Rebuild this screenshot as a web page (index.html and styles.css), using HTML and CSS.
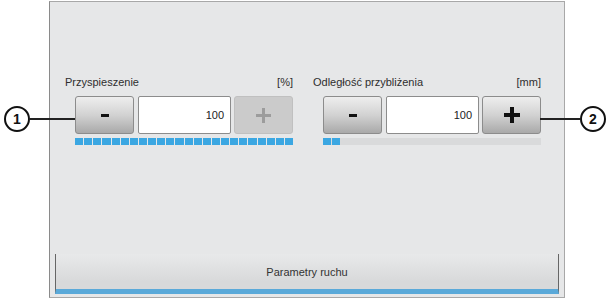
FILE: index.html
```html
<!DOCTYPE html>
<html lang="pl">
<head>
    <meta charset="UTF-8">
    <title>Parametry ruchu</title>
    <link rel="stylesheet" href="styles.css">
</head>
<body>
    <div class="panel">
        <div class="groups">
            <div class="group">
                <div class="group-label">
                    <span>Przyspieszenie</span>
                    <span>[%]</span>
                </div>
                <div class="controls">
                    <button class="step-btn"><span class="minus"></span></button>
                    <div class="value-box">100</div>
                    <button class="step-btn disabled"><span class="plus"></span></button>
                </div>
                <div class="level-bar full">
                    <span></span><span></span><span></span><span></span><span></span><span></span>
                    <span></span><span></span><span></span><span></span><span></span><span></span>
                    <span></span><span></span><span></span><span></span><span></span><span></span>
                    <span></span><span></span><span></span><span></span><span></span><span></span>
                </div>
            </div>
            <div class="group">
                <div class="group-label">
                    <span>Odległość przybliżenia</span>
                    <span>[mm]</span>
                </div>
                <div class="controls">
                    <button class="step-btn"><span class="minus"></span></button>
                    <div class="value-box">100</div>
                    <button class="step-btn"><span class="plus"></span></button>
                </div>
                <div class="level-bar">
                    <span></span><span></span>
                </div>
            </div>
        </div>

        <div class="tab">
            <div class="tab-title">Parametry ruchu</div>
        </div>
    </div>

    <!-- callouts -->
    <div class="callout callout-1">
        <span class="callout-num">1</span>
        <span class="callout-line"></span>
    </div>
    <div class="callout callout-2">
        <span class="callout-line"></span>
        <span class="callout-num">2</span>
    </div>
</body>
</html>
```

FILE: styles.css
```css
* {
    box-sizing: border-box;
}

body {
    margin: 0;
    background-color: #ffffff;
    font-family: 'Liberation Sans', Arial, sans-serif;
    color: #333;
    position: relative;
    width: 614px;
    height: 300px;
    overflow: hidden;
}

.panel {
    margin: 1px 0 0 49px;
    width: 516px;
    height: 297px;
    background-color: #e6e7e8;
    border: 1px solid #a8a8a8;
    border-left-color: #8a8a8a;
    display: flex;
    flex-direction: column;
    padding: 72px 5px 3px 5px;
}

.groups {
    display: flex;
    gap: 20px;
    padding-left: 10px;
}

.group {
    width: 228px;
    display: flex;
    flex-direction: column;
}

.group-label {
    display: flex;
    justify-content: space-between;
    font-size: 11px;
    height: 16px;
    line-height: 16px;
    margin-bottom: 6px;
    color: #2e2e2e;
}

.controls {
    display: flex;
    gap: 3px;
    padding-left: 10px;
    height: 38px;
}

.step-btn {
    width: 59px;
    height: 38px;
    border: 1px solid #8c8c8c;
    border-radius: 3px;
    background: linear-gradient(to bottom, #eeeeee 0%, #d2d2d2 50%, #a9a9a9 100%);
    display: flex;
    align-items: center;
    justify-content: center;
    padding: 0;
    position: relative;
}

.step-btn.disabled {
    background: #cbcbcb;
    border-color: #c0c0c0;
}

.minus {
    width: 8px;
    height: 3px;
    background-color: #111;
}

.plus {
    position: relative;
    width: 16px;
    height: 16px;
}

.plus::before,
.plus::after {
    content: "";
    position: absolute;
    background-color: #111;
}

.plus::before {
    left: 0;
    top: 6px;
    width: 16px;
    height: 4px;
}

.plus::after {
    left: 6px;
    top: 0;
    width: 4px;
    height: 16px;
}

.disabled .plus::before,
.disabled .plus::after {
    background-color: #9c9c9c;
}

.disabled .plus {
    width: 15px;
    height: 15px;
}

.disabled .plus::before {
    top: 6px;
    width: 15px;
    height: 3px;
}

.disabled .plus::after {
    left: 6px;
    width: 3px;
    height: 15px;
}

.value-box {
    width: 93px;
    height: 38px;
    background-color: #fff;
    border: 1px solid #8c8c8c;
    border-radius: 2px;
    font-size: 11px;
    text-align: right;
    padding-right: 6px;
    line-height: 36px;
    color: #222;
}

.controls .step-btn:first-child {
    margin-right: 1px;
}

.level-bar {
    margin: 4px 0 0 10px;
    height: 7px;
    display: flex;
    gap: 1px;
    background-color: #d9dadb;
}

.level-bar.full {
    background-color: transparent;
}

.level-bar span {
    width: 8px;
    height: 7px;
    background-color: #3ba7e2;
}

.level-bar.full span {
    flex: 1;
}

.tab {
    margin-top: auto;
    height: 40px;
    border-left: 1px solid #666;
    border-right: 1px solid #666;
    background: linear-gradient(to bottom, #e8e9ea 0%, #d8d9da 80%);
    border-bottom: 5px solid #5aa9d9;
    display: flex;
    align-items: center;
    justify-content: center;
}

.tab-title {
    font-size: 11px;
    color: #333;
}

.callout {
    position: absolute;
    display: flex;
    align-items: center;
}

.callout-1 {
    left: 4px;
    top: 106px;
}

.callout-2 {
    left: 540px;
    top: 106px;
}

.callout-num {
    width: 26px;
    height: 26px;
    border: 2px solid #111;
    border-radius: 50%;
    background-color: #fff;
    font-size: 14px;
    font-weight: bold;
    color: #111;
    display: flex;
    align-items: center;
    justify-content: center;
}

.callout-line {
    height: 2px;
    background-color: #222;
}

.callout-1 .callout-line {
    width: 45px;
}

.callout-2 .callout-line {
    width: 40px;
}
```
